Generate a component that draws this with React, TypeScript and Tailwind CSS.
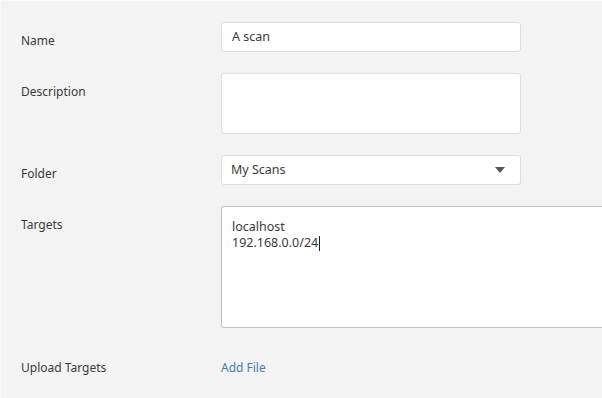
import React from "react";

const fieldBox = "w-[300px] rounded-[3px] border border-[#dedede] bg-white";

const Row = ({ label, children }: { label: string; children: React.ReactNode }) => (
  <div className="flex items-start">
    <div className="w-[220px] shrink-0 pt-[10px] pl-[20px] leading-[17px]">{label}</div>
    {children}
  </div>
);

export default function App() {
  return (
    <div
      className="h-[398px] w-[602px] overflow-hidden border-t border-l border-[#f9f9f9] bg-[#f3f3f3] text-[12px] text-[#3a3a3a]"
      style={{ fontFamily: '"Noto Sans", "Open Sans", sans-serif' }}
    >
      <div className="flex flex-col gap-[21px] pt-[21px]">
        {/* Name */}
        <Row label="Name">
          <div className={`${fieldBox} h-[30px] px-[10px] text-[12.5px] leading-[28px]`}>A scan</div>
        </Row>

        {/* Description */}
        <Row label="Description">
          <div className={`${fieldBox} h-[61px]`} />
        </Row>

        {/* Folder */}
        <Row label="Folder">
          <div className={`${fieldBox} flex h-[30px] items-center justify-between px-[9px] text-[12.5px]`}>
            <span>My Scans</span>
            <svg width="10" height="6" viewBox="0 0 10 6" className="mr-[6px]">
              <path d="M0 0h10L5 6z" fill="#555" />
            </svg>
          </div>
        </Row>

        {/* Targets */}
        <Row label="Targets">
          <div className="h-[122px] w-[440px] shrink-0 rounded-[3px] border border-[#bfc2c4] bg-white px-[10px] pt-[12px] text-[12.5px] leading-[16px] shadow-[0_0_1px_rgba(0,0,0,0.08)]">
            <div>localhost</div>
            <div className="flex items-center">
              <span>192.168.0.0/24</span>
              <span className="ml-[1px] inline-block h-[15px] w-px bg-[#222]" />
            </div>
          </div>
        </Row>

        {/* Upload Targets */}
        <div className="flex items-center pt-[10px] leading-[17px]">
          <div className="w-[220px] shrink-0 pl-[20px]">Upload Targets</div>
          <a className="text-[#4a7bb0]">Add File</a>
        </div>
      </div>
    </div>
  );
}
